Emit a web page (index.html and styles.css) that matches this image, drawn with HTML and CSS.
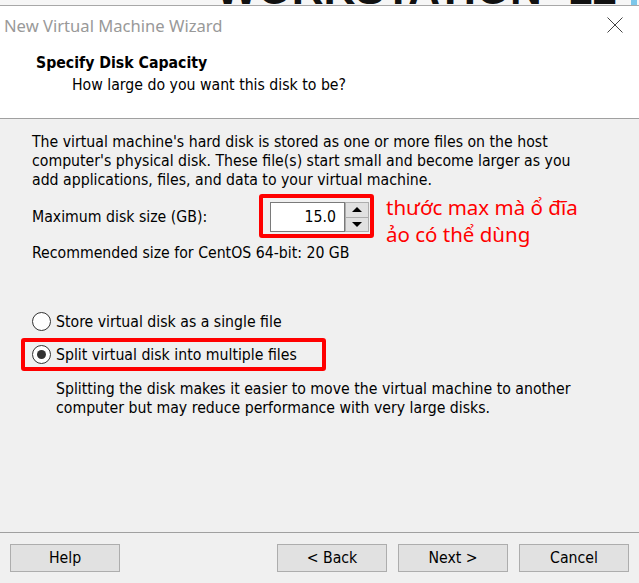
FILE: index.html
```html
<!DOCTYPE html>
<html lang="vi">
<head>
<meta charset="utf-8">
<title>New Virtual Machine Wizard</title>
<link rel="stylesheet" href="styles.css">
</head>
<body>
<div class="window">
  <div class="backdrop"><span class="brand" aria-hidden="true">WORKSTATION 12</span><span class="brand-blue"></span></div>
  <div class="header">
    <div class="titlebar">
      <span class="title">New Virtual Machine Wizard</span>
      <svg class="close" width="16" height="16" viewBox="0 0 16 16"><path d="M0.5 0.5 L15.5 15.5 M15.5 0.5 L0.5 15.5" stroke="#444" stroke-width="1" fill="none"/></svg>
    </div>
    <div class="heading">
      <div class="heading-title">Specify Disk Capacity</div>
      <div class="heading-sub">How large do you want this disk to be?</div>
    </div>
  </div>
  <div class="content">
    <p class="intro">The virtual machine's hard disk is stored as one or more files on the host<br>computer's physical disk. These file(s) start small and become larger as you<br>add applications, files, and data to your virtual machine.</p>
    <div class="disk-row">
      <span class="disk-label">Maximum disk size (GB):</span>
      <div class="mark mark-spin">
        <div class="spin">
          <div class="spin-field">15.0</div>
          <div class="spin-btns">
            <div class="spin-btn"><span class="arrow-up"></span></div>
            <div class="spin-btn"><span class="arrow-down"></span></div>
          </div>
        </div>
      </div>
      <div class="note">thước max mà ổ đĩa<br>ảo có thể dùng</div>
    </div>
    <p class="rec">Recommended size for CentOS 64-bit: 20 GB</p>
    <div class="options">
      <div class="opt"><span class="radio"></span><span>Store virtual disk as a single file</span></div>
      <div class="opt mark"><span class="radio radio-on"></span><span>Split virtual disk into multiple files</span></div>
    </div>
    <p class="desc">Splitting the disk makes it easier to move the virtual machine to another<br>computer but may reduce performance with very large disks.</p>
  </div>
  <div class="footer">
    <div class="btn">Help</div>
    <div class="spacer"></div>
    <div class="btn">&lt; Back</div>
    <div class="btn">Next &gt;</div>
    <div class="btn">Cancel</div>
  </div>
</div>
</body>
</html>
```
FILE: styles.css
```css
html, body {
  margin: 0;
  padding: 0;
}
body {
  background: #f0f0f0;
  font-family: "DejaVu Sans", sans-serif;
  font-stretch: condensed;
  font-size: 15.7px;
  color: #000;
}
.window {
  width: 639px;
  height: 583px;
  display: flex;
  flex-direction: column;
  overflow: hidden;
}
.backdrop {
  height: 5px;
  overflow: hidden;
  background: #f6f6f6;
  border-bottom: 1px solid #a8a8a8;
  display: flex;
  align-items: flex-start;
  flex-shrink: 0;
}
.brand {
  font-family: "Liberation Sans", sans-serif;
  font-stretch: normal;
  font-weight: bold;
  font-size: 44px;
  line-height: 44px;
  margin-top: -33px;
  margin-left: 216px;
  word-spacing: 14px;
  color: #111;
  white-space: nowrap;
}
.brand-blue {
  width: 6px;
  height: 5px;
  background: #7cc7ea;
  margin-left: 14px;
}
.header {
  background: #fff;
  height: 112px;
  border-bottom: 1px solid #a0a0a0;
  flex-shrink: 0;
}
.titlebar {
  height: 37px;
  display: flex;
  align-items: center;
  justify-content: space-between;
  padding: 0 16px 0 4px;
}
.title {
  font-family: "Noto Sans", sans-serif;
  font-stretch: normal;
  font-size: 16.6px;
  color: #999;
  padding-top: 2px;
}
.close {
  display: block;
  margin-top: 1px;
}
.heading {
  padding: 10px 0 0 36px;
}
.heading-title {
  font-weight: bold;
  line-height: 19px;
}
.heading-sub {
  line-height: 19px;
  margin: 3px 0 0 36px;
}
.content {
  flex: 1;
  padding: 13px 0 0 32px;
}
p {
  margin: 0;
  line-height: 19px;
  white-space: nowrap;
}
.disk-row {
  display: flex;
  align-items: center;
  height: 44px;
  margin-top: 5px;
}
.disk-label {
  width: 227px;
}
.mark {
  border: 4px solid #f00;
  border-radius: 3px;
}
.mark-spin {
  padding: 4px 1px 2px 7px;
}
.spin {
  display: flex;
}
.spin-field {
  width: 65px;
  height: 28px;
  background: #fff;
  border: 1px solid #7a7a7a;
  text-align: right;
  line-height: 28px;
  padding-right: 8px;
}
.spin-btns {
  display: flex;
  flex-direction: column;
  width: 24px;
  height: 30px;
}
.spin-btn {
  flex: 1;
  background: #e1e1e1;
  border: 1px solid #adadad;
  display: flex;
  align-items: center;
  justify-content: center;
}
.spin-btn + .spin-btn {
  border-top: none;
}
.arrow-up, .arrow-down {
  width: 0;
  height: 0;
  border-left: 5px solid transparent;
  border-right: 5px solid transparent;
}
.arrow-up {
  border-bottom: 5px solid #000;
}
.arrow-down {
  border-top: 5px solid #000;
}
.note {
  align-self: flex-start;
  margin: 0 0 0 12px;
  font-family: "Noto Sans", sans-serif;
  font-stretch: normal;
  font-size: 20.5px;
  line-height: 27px;
  color: #f00;
  white-space: nowrap;
}
.rec {
  margin-top: 5px;
}
.options {
  margin: 43px 0 0 -11px;
}
.opt {
  display: flex;
  align-items: center;
  gap: 5px;
  height: 25px;
  padding: 0 25px 0 7px;
  border: 4px solid transparent;
  width: max-content;
  white-space: nowrap;
}
.opt.mark {
  border-color: #f00;
}
.radio {
  width: 17px;
  height: 17px;
  border: 1px solid #333;
  border-radius: 50%;
  background: #fff;
  display: flex;
  align-items: center;
  justify-content: center;
  flex-shrink: 0;
}
.radio-on::after {
  content: "";
  width: 9px;
  height: 9px;
  border-radius: 50%;
  background: #333;
}
.desc {
  margin: 8px 0 0 24px;
}
.footer {
  height: 51px;
  border-top: 1px solid #a0a0a0;
  display: flex;
  align-items: flex-start;
  gap: 11px;
  padding: 11px 10px 0 10px;
  box-sizing: border-box;
  flex-shrink: 0;
}
.spacer {
  flex: 1;
}
.btn {
  width: 108px;
  height: 26px;
  background: #e1e1e1;
  border: 1px solid #adadad;
  text-align: center;
  line-height: 26px;
}
```
